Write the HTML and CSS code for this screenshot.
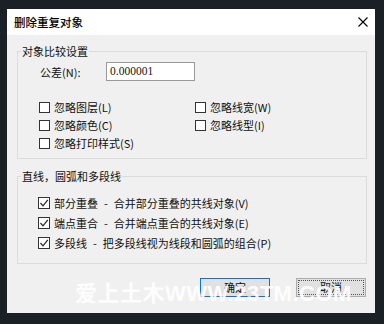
FILE: index.html
```html
<!DOCTYPE html>
<html lang="zh-CN">
<head>
    <meta charset="UTF-8">
    <title>删除重复对象</title>
    <link rel="stylesheet" href="styles.css">
</head>
<body>
    <div class="dialog">
        <div class="titlebar">
            <span class="title">删除重复对象</span>
            <svg class="close" width="10" height="10" viewBox="0 0 10 10">
                <path d="M0.5 0.5 L9.5 9.5 M9.5 0.5 L0.5 9.5" stroke="#000" stroke-width="1.1" fill="none"/>
            </svg>
        </div>
        <div class="content">
            <fieldset class="group first">
                <legend>对象比较设置</legend>
                <div class="inner">
                    <div class="tolerance">
                        <span class="label">公差(N):</span>
                        <div class="input">0.000001</div>
                    </div>
                    <div class="options">
                        <label class="check"><span class="box"></span>忽略图层(L)</label>
                        <label class="check"><span class="box"></span>忽略线宽(W)</label>
                        <label class="check"><span class="box"></span>忽略颜色(C)</label>
                        <label class="check"><span class="box"></span>忽略线型(I)</label>
                        <label class="check"><span class="box"></span>忽略打印样式(S)</label>
                    </div>
                </div>
            </fieldset>
            <fieldset class="group second">
                <legend>直线，圆弧和多段线</legend>
                <div class="inner">
                    <label class="check on"><span class="box"><svg width="10" height="10" viewBox="0 0 10 10"><path d="M1.5 5 L4 7.8 L8.8 1.8" stroke="#222" stroke-width="1.2" fill="none"/></svg></span>部分重叠<span class="dash">-</span>合并部分重叠的共线对象(V)</label>
                    <label class="check on"><span class="box"><svg width="10" height="10" viewBox="0 0 10 10"><path d="M1.5 5 L4 7.8 L8.8 1.8" stroke="#222" stroke-width="1.2" fill="none"/></svg></span>端点重合<span class="dash">-</span>合并端点重合的共线对象(E)</label>
                    <label class="check on"><span class="box"><svg width="10" height="10" viewBox="0 0 10 10"><path d="M1.5 5 L4 7.8 L8.8 1.8" stroke="#222" stroke-width="1.2" fill="none"/></svg></span>多段线<span class="dash">-</span>把多段线视为线段和圆弧的组合(P)</label>
                </div>
            </fieldset>
            <div class="buttons">
                <div class="btn default">确定</div>
                <div class="btn focus">取消</div>
            </div>
        </div>
    </div>
    <div class="watermark">爱上土木WWW.23TM.COM</div>
</body>
</html>
```

FILE: styles.css
```css
body {
    margin: 0;
    width: 384px;
    height: 324px;
    overflow: hidden;
    background: #1b1f26;
    font-family: "Noto Sans CJK SC", sans-serif;
    font-size: 11px;
    color: #111;
    position: relative;
}
.dialog {
    margin: 9px 0 0 7px;
    width: 368px;
    height: 304px;
    background: #f0f0f0;
    display: flex;
    flex-direction: column;
}
.titlebar {
    height: 26px;
    background: #fff;
    display: flex;
    align-items: center;
    justify-content: space-between;
    padding: 0 7px;
}
.title { font-size: 11.5px; font-weight: 500; color: #000; }
.close { display: block; }
.content { padding: 10px 8px 0 10px; }
.group {
    margin: 0;
    padding: 0;
    border: 1px solid #dcdcdc;
    min-width: 0;
}
.group legend {
    margin-left: 3px;
    padding: 0 1px;
    line-height: 12px;
    font-size: 11px;
}
.first .inner { padding: 5px 0 6px 0; }
.tolerance {
    display: flex;
    align-items: center;
    height: 19px;
}
.tolerance .label { width: 66px; padding-left: 22px; }
.input {
    width: 84px;
    height: 17px;
    line-height: 17px;
    padding-left: 3px;
    border: 1px solid #999;
    background: #fff;
    font-family: "Liberation Serif", "Noto Sans CJK SC", serif;
    font-size: 11.5px;
}
.options {
    margin-top: 17px;
    padding-left: 21px;
    display: grid;
    grid-template-columns: 156px 1fr;
    grid-auto-rows: 18px;
}
.check {
    display: flex;
    align-items: center;
    white-space: nowrap;
}
.box {
    width: 9px;
    height: 9px;
    border: 1px solid #333;
    background: #fff;
    margin-right: 4px;
    display: flex;
    align-items: center;
    justify-content: center;
}
.check.on .box { width: 10px; height: 10px; }
.second { margin-top: 11px; }
.second .inner { padding: 11px 0 10px 20px; }
.second .check { height: 20px; }
.dash { margin: 0 6px; }
.buttons {
    margin-top: 14px;
    margin-right: 1px;
    display: flex;
    justify-content: flex-end;
    gap: 26px;
}
.btn {
    width: 68px;
    height: 17px;
    line-height: 17px;
    text-align: center;
    background: #e1e1e1;
    border: 1px solid #adadad;
}
.btn.default { border-color: #0078d7; }
.btn.focus { outline: 1px dotted #555; outline-offset: -3px; }
.watermark {
    position: absolute;
    left: 75px;
    top: 282px;
    color: rgba(255, 255, 255, 0.92);
    font-family: "Liberation Sans", "Noto Sans CJK SC", sans-serif;
    font-size: 22px;
    font-weight: bold;
    letter-spacing: 0.5px;
    line-height: 24px;
    white-space: nowrap;
}
```
